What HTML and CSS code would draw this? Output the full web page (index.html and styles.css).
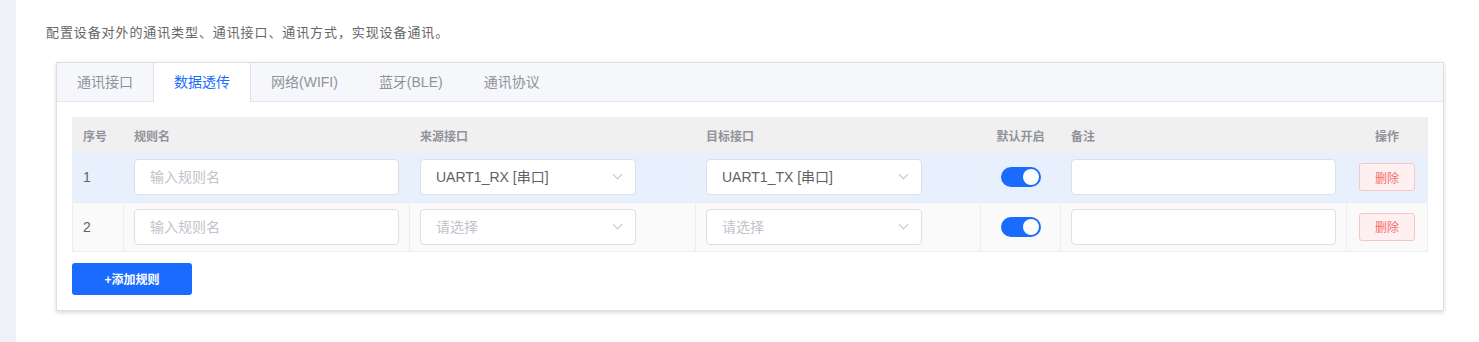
FILE: index.html
```html
<!DOCTYPE html>
<html lang="zh-CN">
<head>
    <meta charset="UTF-8">
    <title>数据透传</title>
    <link rel="stylesheet" href="styles.css">
</head>
<body>
    <div id="wrap">
        <div class="side"></div>
        <div class="main">
            <p class="desc">配置设备对外的通讯类型、通讯接口、通讯方式，实现设备通讯。</p>
            <div class="card">
                <ul class="tabs">
                    <li>通讯接口</li>
                    <li class="active">数据透传</li>
                    <li>网络(WIFI)</li>
                    <li>蓝牙(BLE)</li>
                    <li>通讯协议</li>
                </ul>
                <div class="pane">
                    <table class="grid">
                        <colgroup>
                            <col style="width:51px">
                            <col style="width:286px">
                            <col style="width:286px">
                            <col style="width:285px">
                            <col style="width:80px">
                            <col style="width:286px">
                            <col style="width:81px">
                        </colgroup>
                        <thead>
                            <tr>
                                <th>序号</th>
                                <th>规则名</th>
                                <th>来源接口</th>
                                <th>目标接口</th>
                                <th class="center">默认开启</th>
                                <th>备注</th>
                                <th class="center">操作</th>
                            </tr>
                        </thead>
                        <tbody>
                            <tr class="current">
                                <td>1</td>
                                <td><div class="input placeholder">输入规则名</div></td>
                                <td><div class="input select">UART1_RX [串口]<i class="arrow"></i></div></td>
                                <td><div class="input select">UART1_TX [串口]<i class="arrow"></i></div></td>
                                <td class="center"><span class="switch"></span></td>
                                <td><div class="input"></div></td>
                                <td class="center"><button class="del">删除</button></td>
                            </tr>
                            <tr class="striped">
                                <td>2</td>
                                <td><div class="input placeholder">输入规则名</div></td>
                                <td><div class="input select placeholder">请选择<i class="arrow"></i></div></td>
                                <td><div class="input select placeholder">请选择<i class="arrow"></i></div></td>
                                <td class="center"><span class="switch"></span></td>
                                <td><div class="input"></div></td>
                                <td class="center"><button class="del">删除</button></td>
                            </tr>
                        </tbody>
                    </table>
                    <button class="add">+添加规则</button>
                </div>
            </div>
        </div>
    </div>
</body>
</html>
```

FILE: styles.css
```css
*{
    margin: 0;
    padding: 0;
    box-sizing: border-box;
}
body{
    font-family: "Liberation Sans", "Noto Sans CJK SC", sans-serif;
    background: #fff;
}
#wrap{
    display: flex;
    height: 342px;
    overflow: hidden;
}
.side{
    width: 16px;
    flex: none;
    background: #eff1f6;
}
.main{
    flex: 1;
    padding: 23px 36px 0 30px;
}
.desc{
    font-size: 13px;
    letter-spacing: 0.9px;
    line-height: 20px;
    color: #666;
}
.card{
    margin: 19px 0 0 10px;
    border: 1px solid #dcdfe6;
    background: #fff;
    box-shadow: 0 2px 4px 0 rgba(0,0,0,.12), 0 0 6px 0 rgba(0,0,0,.04);
}
.tabs{
    display: flex;
    list-style: none;
    background: #f5f7fa;
    border-bottom: 1px solid #e4e7ed;
    height: 39px;
}
.tabs li{
    padding: 0 20px;
    height: 39px;
    line-height: 38px;
    font-size: 14px;
    color: #909399;
    border-left: 1px solid transparent;
    border-right: 1px solid transparent;
    margin-left: -1px;
}
.tabs li:first-child{
    margin-left: 0;
    border-left: none;
}
.tabs .active{
    background: #fff;
    color: #1b6bff;
    border-left-color: #dcdfe6;
    border-right-color: #dcdfe6;
}
.pane{
    padding: 15px;
}
.grid{
    width: 100%;
    table-layout: fixed;
    border-collapse: collapse;
    border: 1px solid #ebeef5;
    border-top: none;
    font-size: 14px;
}
.grid th{
    height: 36px;
    background: #f0f0f0;
    color: #909399;
    font-size: 12px;
    font-weight: bold;
    text-align: left;
    padding: 0 10px;
    border-right: 1px solid #ebeef5;
}
.grid td{
    height: 49px;
    padding: 0 10px;
    color: #606266;
    border-right: 1px solid #ebeef5;
    border-bottom: 1px solid #ebeef5;
}
.grid th:last-child,
.grid td:last-child{
    border-right: none;
}
.grid .center{
    text-align: center;
}
.grid .current td{
    background: #e9f0fd;
}
.grid .striped td{
    background: #fafafa;
}
.input{
    position: relative;
    height: 36px;
    line-height: 34px;
    padding: 0 15px;
    border: 1px solid #dcdfe6;
    border-radius: 4px;
    background: #fff;
    font-size: 14px;
    color: #606266;
}
.select{
    width: 216px;
}
.placeholder{
    color: #c0c4cc;
}
.arrow{
    position: absolute;
    right: 14px;
    top: 11px;
    width: 7px;
    height: 7px;
    border-right: 1px solid #c0c4cc;
    border-bottom: 1px solid #c0c4cc;
    transform: rotate(45deg);
}
.switch{
    display: inline-block;
    position: relative;
    vertical-align: middle;
    width: 40px;
    height: 20px;
    border-radius: 10px;
    background: #1b6bff;
}
.switch::after{
    content: "";
    position: absolute;
    right: 2px;
    top: 2px;
    width: 16px;
    height: 16px;
    border-radius: 50%;
    background: #fff;
}
.del{
    width: 56px;
    height: 28px;
    border: 1px solid #fbc4c4;
    border-radius: 3px;
    background: #fef0f0;
    color: #f56c6c;
    font-size: 12px;
    font-family: inherit;
}
.add{
    display: block;
    margin-top: 11px;
    width: 120px;
    height: 32px;
    border: none;
    border-radius: 3px;
    background: #1b6bff;
    color: #fff;
    font-size: 12px;
    font-weight: bold;
    font-family: inherit;
}
```
